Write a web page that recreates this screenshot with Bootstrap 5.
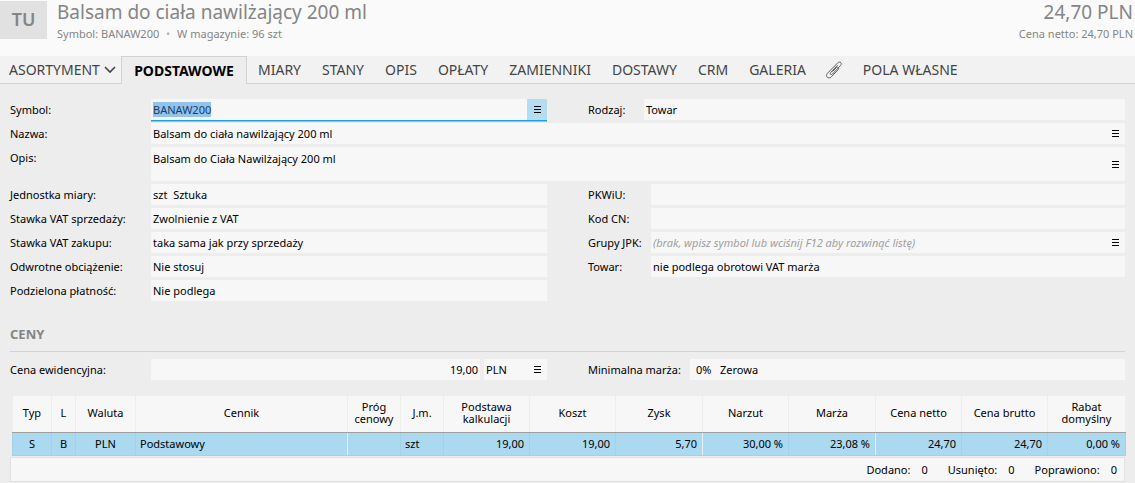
<!DOCTYPE html>
<html lang="pl">
<head>
<meta charset="utf-8">
<meta name="viewport" content="width=device-width, initial-scale=1">
<title>Balsam do ciała nawilżający 200 ml</title>
<link rel="stylesheet" href="https://cdn.jsdelivr.net/npm/bootstrap@5.3.0/dist/css/bootstrap.min.css">
<style>
  body { background: #ededed; color: #000; font: 11px/21px "Noto Sans", "Open Sans", sans-serif; }

  .product-head { background: #fafafa; color: #858585; height: 56px; }
  .tile { background: #e1e1e1; width: 47px; height: 38px; margin-top: 1px; font-size: 18px; line-height: 36px; font-weight: 600; }
  .head-text { margin-left: 10px; }
  .head-price { padding-right: 2px; }
  .title-text { font-size: 19px; line-height: 24px; font-weight: 400; }
  .sub-text { font-size: 11px; line-height: 20px; }
  .sub-text .dot { color: #b5b5b5; }

  .main-tabs { background: #f2f2f2; border-bottom: 1px solid #d2d2d2; height: 28px; font-size: 14px; line-height: 28px; }
  .main-tabs .nav-link { color: #444; padding: 0 10px 0 11px; height: 28px; white-space: nowrap; line-height: 28px; }
  .main-tabs .nav-link.active { background: #ededed; color: #000; font-weight: 700; width: 126px; padding: 0; text-align: center; border: 1px solid #d2d2d2; border-bottom: 0; line-height: 27px; }
  .main-tabs .menu-link { padding: 0 9px; width: 121px; }
  .main-tabs .menu-link svg { flex: none; }
  .main-tabs .clip-link { padding: 0 9px; }

  .form-area { padding: 15px 10px 0; }
  .two-col { display: grid; grid-template-columns: 1fr 1fr; column-gap: 41px; }
  .prices-row { padding-top: 7px; }
  .stack { display: flex; flex-direction: column; gap: 3px; }
  .line { display: flex; align-items: stretch; min-height: 21px; }
  .line > label { flex: none; width: 141px; white-space: nowrap; }
  .narrow > label { width: 63px; }
  .narrow.kind > label { width: 56px; }
  .narrow.margin-line > label { width: 102px; }
  .box { flex: 1 1 0; min-width: 0; display: flex; align-items: stretch; background: #f7f7f7; }
  .box input, .box textarea { flex: 1 1 0; min-width: 0; width: 0; border: 0; padding: 0 2px; background: transparent; outline: 0; color: #000; resize: none; font: inherit; }
  .box input { height: 21px; line-height: 21px; }
  .box textarea { height: 34px; line-height: 15px; padding-top: 4px; overflow: hidden; }
  .box input::placeholder { color: #a0a0a0; font-style: italic; opacity: 1; }
  .box input::selection { background: #93c3ea; color: #12406b; }
  .box.focused { box-shadow: 0 1px #1ba1e2, 0 2px #7cc8ee; z-index: 1; }
  .box.focused input { height: 15px; line-height: 15px; margin: 3px 0; }
  .menu-btn { flex: none; width: 20px; border: 0; padding: 0; background: transparent; display: flex; align-items: center; justify-content: center; color: #000; }
  .focused .menu-btn { background: #b5ddf0; }
  .currency { flex: none; width: 63px; }

  .section-title { font-size: 13px; line-height: 20px; font-weight: 700; color: #858585; margin: 23px 0 0; padding-bottom: 7px; border-bottom: 1px solid #d2d2d2; }

  .price-wrap { margin: 16px -1px 0 2px; }
  .price-table { width: 100%; table-layout: fixed; border-collapse: collapse; line-height: 12px; }
  .price-table th { height: 36px; padding: 0 2px 2px; font-weight: 400; text-align: center; vertical-align: middle; background: #f7f7f7; border: 1px solid #ededed; border-top: 0; border-bottom: 1px solid #9f9f9f; }
  .price-table td { height: 23px; padding: 0 5px 0 4px; background: #abd9ef; border: 1px solid #a3d1e8; border-top: 0; text-align: right; white-space: nowrap; }
  .price-table td.mid { text-align: center; padding: 0; }
  .price-table td.start { text-align: left; }
  .price-table .group-end { border-right: 1px solid #e6eef2; }

  .status-line { background: #f7f7f7; border: 1px solid #e2e2e2; margin-top: 1px; height: 25px; line-height: 23px; padding-right: 7px; gap: 20px; }
  .status-line b { font-weight: 400; margin-left: 11px; }
</style>
</head>
<body>
<svg class="d-none" aria-hidden="true">
  <symbol id="bars" viewBox="0 0 7 7"><path d="M0 0h7v1H0zM0 3h7v1H0zM0 6h7v1H0z" fill="#000"/></symbol>
</svg>

<header class="product-head d-flex align-items-start">
  <div class="tile text-center">TU</div>
  <div class="head-text flex-grow-1">
    <h1 class="title-text mb-0">Balsam do ciała nawilżający 200 ml</h1>
    <div class="sub-text">Symbol: BANAW200 <span class="dot mx-1">•</span> W magazynie: 96 szt</div>
  </div>
  <div class="head-price text-end">
    <div class="title-text">24,70 PLN</div>
    <div class="sub-text">Cena netto: 24,70 PLN</div>
  </div>
</header>

<nav class="main-tabs nav flex-nowrap">
  <a class="nav-link menu-link d-flex align-items-center" href="#">ASORTYMENT
    <svg class="ms-1" width="12" height="8" viewBox="0 0 12 8" fill="none" stroke="#444" stroke-width="1.6"><path d="M1 1l5 5 5-5"/></svg></a>
  <a class="nav-link active" href="#" aria-current="page">PODSTAWOWE</a>
  <a class="nav-link" href="#">MIARY</a>
  <a class="nav-link" href="#">STANY</a>
  <a class="nav-link" href="#">OPIS</a>
  <a class="nav-link" href="#">OPŁATY</a>
  <a class="nav-link" href="#">ZAMIENNIKI</a>
  <a class="nav-link" href="#">DOSTAWY</a>
  <a class="nav-link" href="#">CRM</a>
  <a class="nav-link" href="#">GALERIA</a>
  <a class="nav-link clip-link d-flex align-items-center" href="#" aria-label="Załączniki">
    <svg width="18" height="18" viewBox="0 0 18 18" fill="none" stroke="#606060" stroke-width="1" stroke-linecap="round" stroke-linejoin="round"><path d="M12.300 4.500L5.700 11.500c-1.200 1.400.400 2.900 1.700 1.600l8.200-8.700c2-2.300-.900-4.600-2.900-2.500L2.500 12.200c-2.900 3.300 1.100 6.500 3.900 3.600l6.700-7.100c1.600-1.800-.400-3.500-2-1.900l-3.300 3.500"/></svg></a>
  <a class="nav-link" href="#">POLA WŁASNE</a>
</nav>

<main class="form-area">
  <div class="stack">
    <div class="two-col">
      <div class="line"><label for="symbol">Symbol:</label>
        <div class="box focused"><input id="symbol" type="text" value="BANAW200"><button class="menu-btn" type="button" aria-label="Menu"><svg width="7" height="7"><use href="#bars"/></svg></button></div></div>
      <div class="line narrow kind"><label for="kind">Rodzaj:</label>
        <div class="box"><input id="kind" type="text" value="Towar"></div></div>
    </div>
    <div class="line"><label for="name">Nazwa:</label>
      <div class="box"><input id="name" type="text" value="Balsam do ciała nawilżający 200 ml"><button class="menu-btn" type="button" aria-label="Menu"><svg width="7" height="7"><use href="#bars"/></svg></button></div></div>
    <div class="line"><label for="desc">Opis:</label>
      <div class="box"><textarea id="desc">Balsam do Ciała Nawilżający 200 ml</textarea><button class="menu-btn" type="button" aria-label="Menu"><svg width="7" height="7"><use href="#bars"/></svg></button></div></div>
    <div class="two-col">
      <div class="stack">
        <div class="line"><label for="unit">Jednostka miary:</label><div class="box"><input id="unit" type="text" value="szt  Sztuka"></div></div>
        <div class="line"><label for="vat-sale">Stawka VAT sprzedaży:</label><div class="box"><input id="vat-sale" type="text" value="Zwolnienie z VAT"></div></div>
        <div class="line"><label for="vat-buy">Stawka VAT zakupu:</label><div class="box"><input id="vat-buy" type="text" value="taka sama jak przy sprzedaży"></div></div>
        <div class="line"><label for="reverse">Odwrotne obciążenie:</label><div class="box"><input id="reverse" type="text" value="Nie stosuj"></div></div>
        <div class="line"><label for="split">Podzielona płatność:</label><div class="box"><input id="split" type="text" value="Nie podlega"></div></div>
      </div>
      <div class="stack">
        <div class="line narrow"><label for="pkwiu">PKWiU:</label><div class="box"><input id="pkwiu" type="text"></div></div>
        <div class="line narrow"><label for="cn">Kod CN:</label><div class="box"><input id="cn" type="text"></div></div>
        <div class="line narrow"><label for="jpk">Grupy JPK:</label><div class="box"><input id="jpk" type="text" placeholder="(brak, wpisz symbol lub wciśnij F12 aby rozwinąć listę)"><button class="menu-btn" type="button" aria-label="Menu"><svg width="7" height="7"><use href="#bars"/></svg></button></div></div>
        <div class="line narrow"><label for="goods">Towar:</label><div class="box"><input id="goods" type="text" value="nie podlega obrotowi VAT marża"></div></div>
      </div>
    </div>
  </div>

  <h2 class="section-title">CENY</h2>

  <div class="two-col prices-row">
    <div class="line"><label for="price">Cena ewidencyjna:</label>
      <div class="box"><input id="price" class="text-end" type="text" value="19,00"></div>
      <div class="box currency ms-1"><input type="text" value="PLN" aria-label="Waluta"><button class="menu-btn" type="button" aria-label="Menu"><svg width="7" height="7"><use href="#bars"/></svg></button></div></div>
    <div class="line narrow margin-line"><label for="margin">Minimalna marża:</label>
      <div class="box ps-1"><input id="margin" type="text" value="0%   Zerowa"></div></div>
  </div>

  <div class="price-wrap">
    <table class="price-table">
      <colgroup>
        <col style="width:39px"><col style="width:24px"><col style="width:60px"><col><col style="width:53px"><col style="width:43px">
        <col style="width:86px"><col style="width:86px"><col style="width:87px"><col style="width:86px"><col style="width:87px"><col style="width:86px"><col style="width:86px"><col style="width:78px">
      </colgroup>
      <thead>
        <tr><th>Typ</th><th>L</th><th>Waluta</th><th>Cennik</th><th>Próg cenowy</th><th>J.m.</th><th>Podstawa kalkulacji</th><th>Koszt</th><th>Zysk</th><th>Narzut</th><th>Marża</th><th>Cena netto</th><th>Cena brutto</th><th>Rabat domyślny</th></tr>
      </thead>
      <tbody>
        <tr><td class="mid">S</td><td class="mid">B</td><td class="mid">PLN</td><td class="start group-end">Podstawowy</td><td></td><td class="start">szt</td><td>19,00</td><td>19,00</td><td class="group-end">5,70</td><td>30,00 %</td><td class="group-end">23,08 %</td><td>24,70</td><td>24,70</td><td>0,00 %</td></tr>
      </tbody>
    </table>
  </div>
  <div class="status-line d-flex justify-content-end">
    <span>Dodano:<b>0</b></span><span>Usunięto:<b>0</b></span><span>Poprawiono:<b>0</b></span>
  </div>
</main>
<script src="https://cdn.jsdelivr.net/npm/bootstrap@5.3.0/dist/js/bootstrap.bundle.min.js"></script>
<script>
  const symbolField = document.getElementById('symbol');
  symbolField.focus();
  symbolField.select();
</script>
</body>
</html>
